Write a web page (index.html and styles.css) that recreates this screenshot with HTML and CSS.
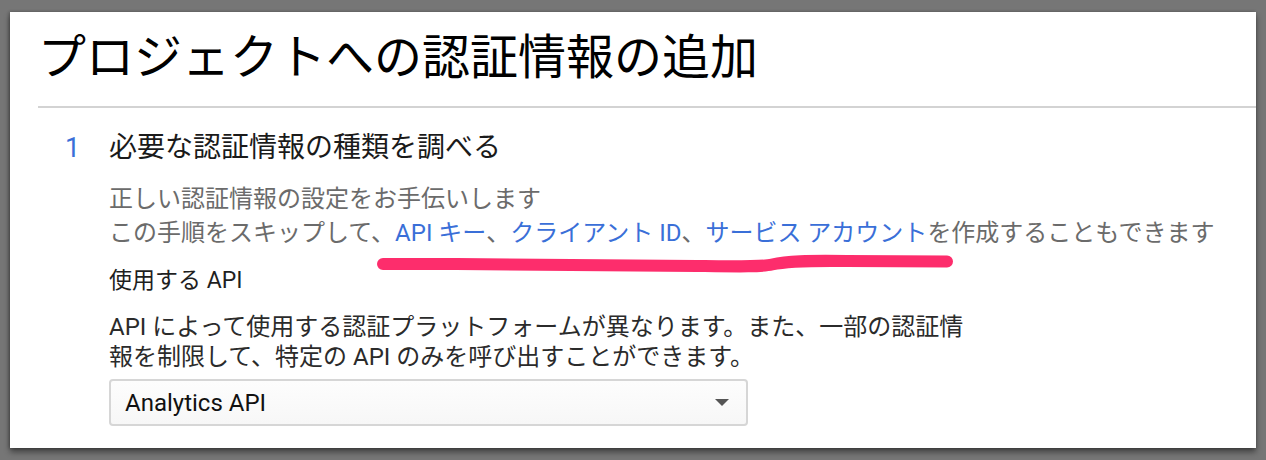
FILE: index.html
```html
<!DOCTYPE html>
<html lang="ja">
<head>
<meta charset="utf-8">
<link rel="stylesheet" href="styles.css">
</head>
<body>
<div class="panel">
  <h1 class="title">プロジェクトへの認証情報の追加</h1>
  <div class="rule"></div>
  <div class="step">
    <div class="step-num">1</div>
    <div class="step-body">
      <h2 class="step-title">必要な認証情報の種類を調べる</h2>
      <div class="desc">
        <p>正しい認証情報の設定をお手伝いします</p>
        <p class="links-line">この手順をスキップして、<a class="link">API キー</a>、<a class="link">クライアント ID</a>、<a class="link">サービス アカウント</a>を作成することもできます
          <svg class="marker" width="580" height="24" viewBox="0 0 580 24"><path d="M6 11 C 120 11, 250 12, 320 13 C 360 13.5, 385 14, 395 11.5 C 410 8, 430 7.5, 470 8 C 520 8.5, 550 8.5, 570 8.5" fill="none" stroke="#fd2d6c" stroke-width="12" stroke-linecap="round"/></svg>
        </p>
      </div>
      <div class="label">使用する API</div>
      <p class="help">API によって使用する認証プラットフォームが異なります。また、一部の認証情<br>報を制限して、特定の API のみを呼び出すことができます。</p>
      <div class="select">
        <span>Analytics API</span>
        <span class="arrow"></span>
      </div>
    </div>
  </div>
</div>
</body>
</html>
```
FILE: styles.css
```css
html, body {
  margin: 0;
  padding: 0;
}
body {
  background: #767676;
  width: 1266px;
  height: 460px;
  overflow: hidden;
  font-family: Roboto, "Noto Sans CJK JP", sans-serif;
}
.panel {
  margin: 12px 10px 0 10px;
  height: 436px;
  background: #fff;
  box-shadow: 0 4px 6px rgba(0,0,0,0.45), -1px 0 3px rgba(0,0,0,0.25);
  overflow: hidden;
}
.title {
  margin: 0;
  padding: 18px 0 0 28px;
  font-size: 48px;
  font-weight: 400;
  line-height: 56px;
  color: #000;
  height: 76px;
  box-sizing: content-box;
}
.rule {
  margin-left: 28px;
  border-top: 2px solid #d3d3d3;
}
.step {
  display: flex;
  padding-top: 22px;
}
.step-num {
  width: 44px;
  padding-left: 55px;
  font-size: 27px;
  line-height: 36px;
  color: #3a6fd8;
}
.step-body {
  flex: 1;
}
.step-title {
  margin: 0;
  font-size: 28px;
  font-weight: 400;
  line-height: 36px;
  color: #1a1a1a;
}
.desc {
  margin-top: 16px;
  color: #6b6b6b;
  font-size: 24px;
  line-height: 34px;
}
.desc p {
  margin: 0;
}
.links-line {
  position: relative;
}
.link {
  color: #3a6fd8;
  text-decoration: none;
}
.marker {
  position: absolute;
  left: 268px;
  top: 37px;
}
.label {
  margin-top: 16px;
  font-size: 23px;
  line-height: 30px;
  color: #1f1f1f;
}
.help {
  margin: 16px 0 0 0;
  font-size: 24px;
  line-height: 30px;
  color: #2b2b2b;
}
.select {
  margin-top: 7px;
  width: 639px;
  height: 47px;
  box-sizing: border-box;
  border: 2px solid #d6d6d6;
  border-radius: 4px;
  background: linear-gradient(#fdfdfd, #f7f7f7);
  display: flex;
  align-items: center;
  justify-content: space-between;
  padding: 0 17px 0 14px;
  font-size: 24px;
  color: #111;
}
.arrow {
  width: 0;
  height: 0;
  border-left: 7px solid transparent;
  border-right: 7px solid transparent;
  border-top: 7px solid #555;
}
```
